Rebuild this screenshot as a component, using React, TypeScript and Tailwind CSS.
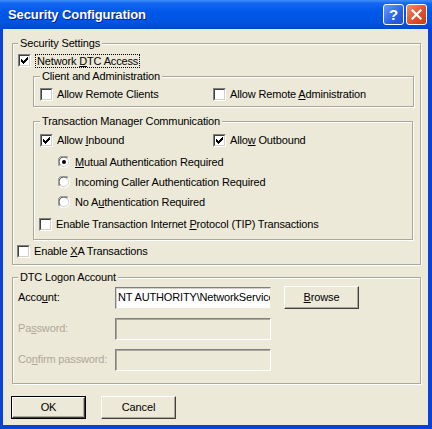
import type { ReactNode } from 'react'

function Check({ checked }: { checked?: boolean }) {
  return (
    <span className="flex h-[13px] w-[13px] shrink-0 border border-t-[#808080] border-l-[#808080] border-b-white border-r-white">
      <span className="flex flex-1 items-center justify-center bg-white border border-t-[#404040] border-l-[#404040] border-b-[#d4d0c8] border-r-[#d4d0c8]">
        {checked && (
          <svg width="7" height="7" viewBox="0 0 7 7" shapeRendering="crispEdges">
            <path d="M6 0h1v1h-1zM5 1h2v1h-2zM0 2h1v1h-1zM4 2h3v1h-3zM0 3h2v1h-2zM3 3h3v1h-3zM0 4h5v1h-5zM1 5h3v1h-3zM2 6h1v1h-1z" fill="#000" />
          </svg>
        )}
      </span>
    </span>
  )
}

function Radio({ checked }: { checked?: boolean }) {
  return (
    <svg width="12" height="12" viewBox="0 0 12 12" className="shrink-0">
      <circle cx="6" cy="6" r="5.5" fill="#fff" />
      <path d="M1.5 10.2A5.5 5.5 0 0 1 10.2 1.5" fill="none" stroke="#808080" strokeWidth="1" />
      <path d="M2.4 9.3A4.4 4.4 0 0 1 9.3 2.4" fill="none" stroke="#404040" strokeWidth="1" />
      <path d="M10.2 1.6A5.5 5.5 0 0 1 1.6 10.2" fill="none" stroke="#fff" strokeWidth="1" />
      <path d="M9.3 2.5A4.4 4.4 0 0 1 2.5 9.3" fill="none" stroke="#d4d0c8" strokeWidth="1" />
      {checked && <circle cx="6" cy="6" r="2" fill="#000" />}
    </svg>
  )
}

function Key({ children }: { children: ReactNode }) {
  return <span className="underline underline-offset-[1px]">{children}</span>
}

function CheckRow({ checked, children, className = '' }: { checked?: boolean; children: ReactNode; className?: string }) {
  return (
    <div className={`flex h-[15px] items-center gap-[4px] ${className}`}>
      <Check checked={checked} />
      <span className="whitespace-nowrap">{children}</span>
    </div>
  )
}

function RadioRow({ checked, children }: { checked?: boolean; children: ReactNode }) {
  return (
    <div className="flex h-[20px] items-center gap-[5px] pl-[18px]">
      <Radio checked={checked} />
      <span className="whitespace-nowrap">{children}</span>
    </div>
  )
}

function Group({ label, className = '', children }: { label: string; className?: string; children: ReactNode }) {
  return (
    <fieldset className={`min-w-0 border border-[#aca899] shadow-[1px_1px_0_#fff,inset_1px_1px_0_#fff] ${className}`}>
      <legend className="bg-[#ece9d8] px-[2px] leading-[13px] whitespace-nowrap">{label}</legend>
      {children}
    </fieldset>
  )
}

function Btn({ children, def, className = '' }: { children: ReactNode; def?: boolean; className?: string }) {
  return (
    <button className={`flex h-[23px] w-[75px] shrink-0 bg-[#ece9d8] ${def ? 'border border-black' : ''} ${className}`}>
      <span className="flex flex-1 items-center justify-center border border-t-white border-l-white border-b-[#404040] border-r-[#404040] shadow-[inset_-1px_-1px_0_#aca899]">
        {children}
      </span>
    </button>
  )
}

function Field({ value, disabled }: { value?: string; disabled?: boolean }) {
  return (
    <div
      className={`flex h-[22px] w-[156px] shrink-0 items-center overflow-hidden border pl-[2px] whitespace-nowrap ${
        disabled
          ? 'border-t-[#808080] border-l-[#808080] border-b-white border-r-white bg-[#ece9d8] shadow-[inset_1px_1px_0_#aca899]'
          : 'border-t-[#808080] border-l-[#808080] border-b-[#ece9d8] border-r-[#ece9d8] bg-white shadow-[inset_1px_1px_0_#d4d0c8]'
      }`}
    >
      {value}
    </div>
  )
}

export default function App() {
  return (
    <div className="flex h-[429px] w-[432px] flex-col bg-[#0842d8] font-[Tahoma,'Liberation_Sans',Arial,sans-serif] text-[11px] leading-[13px] tracking-[-0.15px] text-black">
      <div className="flex h-[29px] shrink-0 items-center bg-[linear-gradient(to_bottom,#3e8ef7_0%,#1466f2_12%,#0058e8_40%,#0054e2_75%,#0048cf_100%)] pl-[8px] pr-[5px]">
        <span className="text-[13px] font-bold tracking-[-0.1px] text-white [text-shadow:1px_1px_0_#0a1e8c]">Security Configuration</span>
        <div className="ml-auto flex gap-[2px]">
          <div className="flex h-[21px] w-[21px] items-center justify-center rounded-[3px] border border-white bg-[linear-gradient(135deg,#6b9cf8,#2a62e6_60%,#1f4fd0)] text-[15px] font-bold text-white">?</div>
          <div className="flex h-[21px] w-[21px] items-center justify-center rounded-[3px] border border-white bg-[linear-gradient(135deg,#f0906c,#e0512c_55%,#c83d18)]">
            <svg width="11" height="11" viewBox="0 0 11 11">
              <path d="M1.5 1.5l8 8M9.5 1.5l-8 8" stroke="#fff" strokeWidth="2.2" strokeLinecap="square" />
            </svg>
          </div>
        </div>
      </div>

      <div className="ml-[3px] mr-[4px] mb-[4px] flex flex-1 flex-col bg-[#ece9d8]">
        <Group label="Security Settings" className="ml-[9px] mt-[8px] w-[409px] pl-[5px] pb-[5px]">
          <div className="mt-[3px] flex h-[15px] items-center gap-[4px]">
            <Check checked />
            <span className="border border-dotted border-black px-[1px] leading-[12px] whitespace-nowrap">
              Network <Key>D</Key>TC Access
            </span>
          </div>

          <Group label="Client and Administration" className="ml-[15px] mt-[2px] w-[381px] pl-[6px] pt-[4px] pb-[4px]">
            <div className="flex">
              <CheckRow className="w-[173px]">Allow Remote Clients</CheckRow>
              <CheckRow>
                Allow Remote <Key>A</Key>dministration
              </CheckRow>
            </div>
          </Group>

          <Group label="Transaction Manager Communication" className="ml-[15px] mt-[8px] w-[380px] pl-[6px] pt-[5px] pb-[7px]">
            <div className="flex">
              <CheckRow checked className="w-[173px]">
                Allow <Key>I</Key>nbound
              </CheckRow>
              <CheckRow checked>
                Allo<Key>w</Key> Outbound
              </CheckRow>
            </div>
            <div className="mt-[4px]">
              <RadioRow checked>
                <Key>M</Key>utual Authentication Required
              </RadioRow>
              <RadioRow>
                Incomin<Key>g</Key> Caller Authentication Required
              </RadioRow>
              <RadioRow>
                No A<Key>u</Key>thentication Required
              </RadioRow>
            </div>
            <CheckRow className="mt-[5px] -ml-[1px]">
              Enable Transaction Internet <Key>P</Key>rotocol (TIP) Transactions
            </CheckRow>
          </Group>

          <CheckRow className="mt-[4px] -ml-[1px]">
            Enable <Key>X</Key>A Transactions
          </CheckRow>
        </Group>

        <Group label="DTC Logon Account" className="ml-[9px] mt-[6px] w-[409px] pl-[5px] pt-[2px] pb-[12px]">
          <div className="flex h-[23px] items-center">
            <span className="w-[97px] shrink-0">
              Acco<Key>u</Key>nt:
            </span>
            <Field value="NT AUTHORITY\NetworkService" />
            <Btn className="ml-[13px]">
              <Key>B</Key>rowse
            </Btn>
          </div>
          <div className="mt-[8px] flex h-[23px] items-center text-[#aca899]">
            <span className="w-[97px] shrink-0">
              Pa<Key>s</Key>sword:
            </span>
            <Field disabled />
          </div>
          <div className="mt-[8px] flex h-[23px] items-center text-[#aca899]">
            <span className="w-[97px] shrink-0">
              Co<Key>n</Key>firm password:
            </span>
            <Field disabled />
          </div>
        </Group>

        <div className="ml-[8px] mt-[12px] flex gap-[15px]">
          <Btn def>OK</Btn>
          <Btn>Cancel</Btn>
        </div>
      </div>
    </div>
  )
}
